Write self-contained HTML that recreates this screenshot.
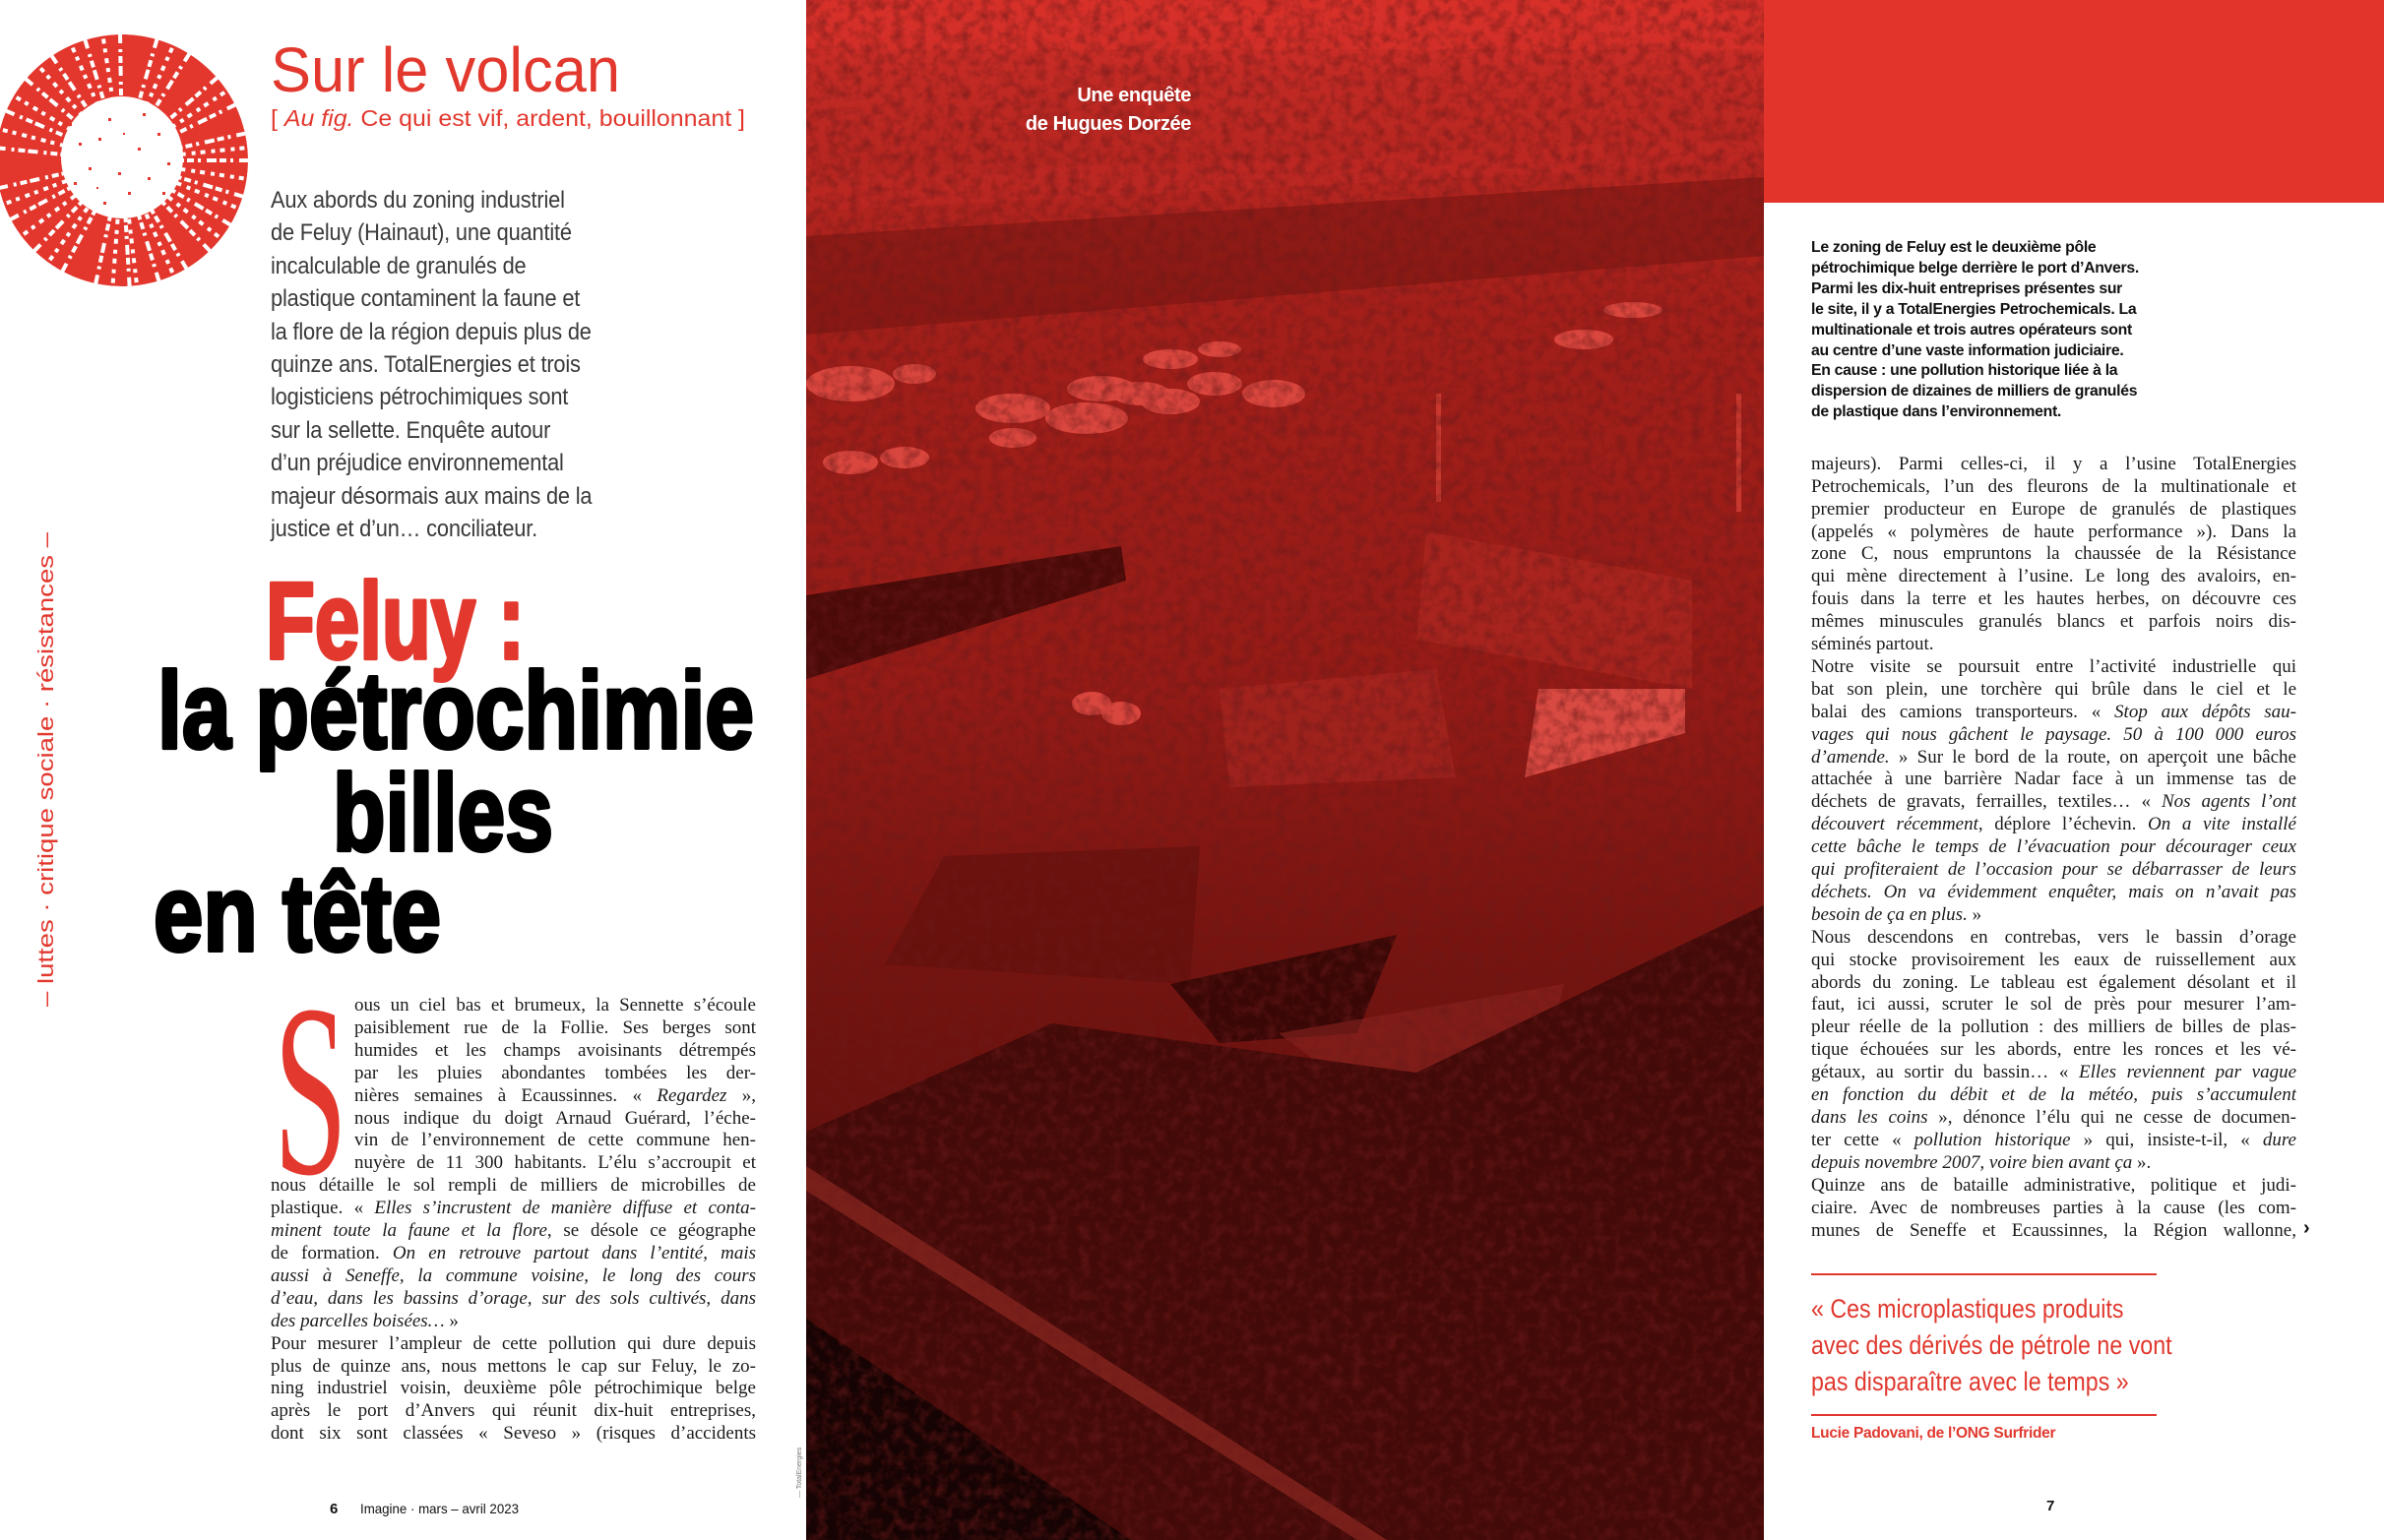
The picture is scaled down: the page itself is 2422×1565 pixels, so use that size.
<!DOCTYPE html>
<html><head><meta charset="utf-8">
<style>
*{margin:0;padding:0;box-sizing:border-box}
html,body{width:2422px;height:1565px;overflow:hidden;background:#fff}
body{position:relative;font-family:"Liberation Sans",sans-serif}
.abs{position:absolute}
.ln{position:absolute;height:23px;line-height:23px;font-family:"Liberation Serif",serif;font-size:19px;color:#1a1a1a;text-align:justify;text-align-last:justify;overflow:hidden;white-space:normal}
.ln.l{text-align-last:left}
.deck{position:absolute;left:275px;font-size:24.5px;line-height:33.4px;color:#3a3a3a;transform:scaleX(0.89);transform-origin:left top;white-space:nowrap;letter-spacing:-0.2px}
.intro{position:absolute;left:1840px;top:242px;font-weight:bold;font-size:15.8px;line-height:20.9px;color:#111;letter-spacing:-0.3px;white-space:nowrap}
.pq{position:absolute;left:1840px;font-size:27px;line-height:37px;color:#e0382e;transform:scaleX(0.86);transform-origin:left top;white-space:nowrap}
</style></head><body>

<svg class="abs" style="left:819px;top:0" width="973" height="1565" viewBox="0 0 973 1565">
<defs>
<linearGradient id="pg" x1="0" y1="0" x2="0" y2="1">
<stop offset="0" stop-color="#d9312a"/>
<stop offset="0.05" stop-color="#c22a24"/>
<stop offset="0.2" stop-color="#a41f1a"/>
<stop offset="0.45" stop-color="#941b16"/>
<stop offset="0.62" stop-color="#761410"/>
<stop offset="1" stop-color="#440a08"/>
</linearGradient>
<filter id="nz" x="0" y="0" width="100%" height="100%">
<feTurbulence type="fractalNoise" baseFrequency="0.09" numOctaves="3" seed="4"/>
<feColorMatrix type="matrix" values="0 0 0 0 0.15  0 0 0 0 0.01  0 0 0 0 0.01  0 0 0 -2.2 1.35"/>
</filter>
</defs>
<rect width="973" height="1565" fill="url(#pg)"/>
<rect y="0" width="973" height="50" fill="#d6302a" opacity="0.7"/>
<polygon points="0,240 973,180 973,260 0,340" fill="#6e120e" opacity="0.5"/>
<polygon points="0,180 973,140 973,165 0,215" fill="#c62b25" opacity="0.4"/>
<g fill="#d9463e">
<ellipse cx="45" cy="390" rx="45" ry="18"/><ellipse cx="110" cy="380" rx="22" ry="10"/>
<ellipse cx="210" cy="415" rx="38" ry="15"/><ellipse cx="285" cy="425" rx="42" ry="16"/>
<ellipse cx="300" cy="395" rx="35" ry="13"/><ellipse cx="340" cy="400" rx="30" ry="12"/>
<ellipse cx="370" cy="408" rx="30" ry="13"/><ellipse cx="415" cy="390" rx="28" ry="12"/>
<ellipse cx="475" cy="400" rx="32" ry="14"/><ellipse cx="370" cy="365" rx="28" ry="10"/>
<ellipse cx="420" cy="355" rx="22" ry="8"/><ellipse cx="210" cy="445" rx="24" ry="10"/>
<ellipse cx="45" cy="470" rx="28" ry="12"/><ellipse cx="100" cy="465" rx="25" ry="11"/>
<ellipse cx="790" cy="345" rx="30" ry="10"/><ellipse cx="840" cy="315" rx="30" ry="8"/>
<ellipse cx="290" cy="715" rx="20" ry="12"/><ellipse cx="320" cy="725" rx="20" ry="12"/>
</g>
<polygon points="0,605 320,555 325,590 0,690" fill="#4a0a08"/>
<polygon points="630,540 900,590 900,700 620,650" fill="#c8342c" opacity="0.35"/>
<polygon points="744,700 893,700 893,745 730,790" fill="#d84a42"/>
<polygon points="420,700 640,680 660,790 430,800" fill="#b02a23" opacity="0.5"/>
<rect x="640" y="400" width="5" height="110" fill="#c8382f"/><rect x="945" y="400" width="5" height="120" fill="#c8382f"/>
<polygon points="140,870 400,860 390,1000 80,980" fill="#5e0f0c" opacity="0.6"/>
<polygon points="370,1000 600,950 560,1050 420,1060" fill="#2a0504" opacity="0.8"/>
<polygon points="480,1050 770,1000 740,1120 520,1080" fill="#8c2520" opacity="0.6"/>
<polygon points="0,1150 250,1040 620,1090 973,920 973,1565 0,1565" fill="#420a08"/>
<polygon points="0,1185 590,1565 560,1565 0,1210" fill="#7a201b"/>
<polygon points="0,1340 330,1565 0,1565" fill="#160303"/>
<rect width="973" height="1565" filter="url(#nz)" opacity="0.55"/>
<text x="391" y="103" text-anchor="end" font-family="Liberation Sans" font-weight="bold" font-size="20" fill="#fff" letter-spacing="-0.4">Une enquête</text>
<text x="391" y="132" text-anchor="end" font-family="Liberation Sans" font-weight="bold" font-size="20" fill="#fff" letter-spacing="-0.4">de Hugues Dorzée</text>
</svg>

<div class="abs" style="left:1792px;top:0;width:630px;height:206px;background:#e3342c"></div>

<svg class="abs" style="left:0;top:0" width="819" height="1565" viewBox="0 0 819 1565">
<defs><clipPath id="cc"><circle cx="124" cy="163" r="128"/></clipPath></defs>
<g clip-path="url(#cc)">
<circle cx="124" cy="163" r="128" fill="#e3362d"/>
<g stroke="#fff" stroke-width="4" stroke-dasharray="7 4 3 6 10 3" fill="none">
<path d="M124 163 L254 163 M124 163 L248 200 M124 163 L240 232 M124 163 L222 264 M124 163 L196 284 M124 163 L164 294 M124 163 L132 297 M124 163 L96 294 M124 163 L60 282 M124 163 L30 260 M124 163 L5 226 M124 163 L-5 192 M124 163 L-6 150 M124 163 L0 110 M124 163 L20 75 M124 163 L48 50 M124 163 L85 36 M124 163 L122 33 M124 163 L160 38 M124 163 L194 52 M124 163 L224 76 M124 163 L242 105 M124 163 L252 135"/>
<path d="M124 163 L252 182 M124 163 L234 250 M124 163 L182 292 M124 163 L114 297 M124 163 L45 272 M124 163 L-3 210 M124 163 L-5 130 M124 163 L33 60 M124 163 L104 33 M124 163 L177 44 M124 163 L234 90 M124 163 L252 150 M124 163 L70 40 M124 163 L10 95 M124 163 L250 215 M124 163 L140 298 M124 163 L15 245" stroke-dasharray="5 6 4 5"/>
</g>
<circle cx="124" cy="160" r="62" fill="#fff"/>
<g fill="#e3362d"><rect x="100" y="140" width="3" height="3"/><rect x="140" y="150" width="3" height="3"/><rect x="120" y="175" width="3" height="3"/><rect x="90" y="170" width="3" height="3"/><rect x="150" y="180" width="3" height="3"/><rect x="110" y="120" width="3" height="3"/><rect x="160" y="135" width="3" height="3"/><rect x="80" y="145" width="3" height="3"/><rect x="130" y="195" width="3" height="3"/><rect x="75" y="185" width="3" height="3"/><rect x="170" y="165" width="3" height="3"/><rect x="105" y="205" width="3" height="3"/><rect x="145" y="115" width="3" height="3"/><rect x="125" y="135" width="2" height="2"/><rect x="98" y="190" width="2" height="2"/><rect x="165" y="195" width="3" height="3"/><rect x="70" y="125" width="3" height="3"/></g>
</g>
<text x="275" y="93" font-family="Liberation Sans" font-size="64" fill="#e2382e" textLength="355" lengthAdjust="spacingAndGlyphs">Sur le volcan</text>
<text x="275" y="128" font-family="Liberation Sans" font-size="23" fill="#e2382e" textLength="482" lengthAdjust="spacingAndGlyphs">[ <tspan font-style="italic">Au fig.</tspan> Ce qui est vif, ardent, bouillonnant ]</text>
<g font-family="Liberation Sans" font-weight="bold" font-size="110" stroke-width="4" stroke-linejoin="round">
<text x="270" y="669" fill="#e2382e" stroke="#e2382e" textLength="263" lengthAdjust="spacingAndGlyphs">Feluy :</text>
<text x="160" y="760" fill="#000" stroke="#000" textLength="606" lengthAdjust="spacingAndGlyphs">la pétrochimie</text>
<text x="338" y="864" fill="#000" stroke="#000" textLength="224" lengthAdjust="spacingAndGlyphs">billes</text>
<text x="156" y="966" fill="#000" stroke="#000" textLength="292" lengthAdjust="spacingAndGlyphs">en tête</text>
</g>
<text transform="translate(54,1023) rotate(-90)" font-family="Liberation Sans" font-size="22" fill="#e2382e" textLength="482" lengthAdjust="spacingAndGlyphs">– luttes · critique sociale · résistances –</text>
<text x="278" y="1192" font-family="Liberation Serif" font-size="250" fill="#e2382e" textLength="75" lengthAdjust="spacingAndGlyphs">S</text>
<text x="335" y="1538" font-family="Liberation Sans" font-weight="bold" font-size="15" fill="#111">6</text>
<text x="366" y="1538" font-family="Liberation Sans" font-size="14" fill="#111" textLength="161" lengthAdjust="spacingAndGlyphs">Imagine · mars – avril 2023</text>
<text transform="translate(814,1522) rotate(-90)" font-family="Liberation Sans" font-size="7" fill="#777">— TotalEnergies</text>
</svg>

<div class="deck" style="top:187px">Aux abords du zoning industriel<br>de Feluy (Hainaut), une quantité<br>incalculable de granulés de<br>plastique contaminent la faune et<br>la flore de la région depuis plus de<br>quinze ans. TotalEnergies et trois<br>logisticiens pétrochimiques sont<br>sur la sellette. Enquête autour<br>d’un préjudice environnemental<br>majeur désormais aux mains de la<br>justice et d’un… conciliateur.</div>

<div class="ln" style="left:360px;width:408px;top:1010px">ous un ciel bas et brumeux, la Sennette s’écoule</div>
<div class="ln" style="left:360px;width:408px;top:1033px">paisiblement rue de la Follie. Ses berges sont</div>
<div class="ln" style="left:360px;width:408px;top:1056px">humides et les champs avoisinants détrempés</div>
<div class="ln" style="left:360px;width:408px;top:1079px">par les pluies abondantes tombées les der-</div>
<div class="ln" style="left:360px;width:408px;top:1102px">nières semaines à Ecaussinnes. « <i>Regardez</i> »,</div>
<div class="ln" style="left:360px;width:408px;top:1125px">nous indique du doigt Arnaud Guérard, l’éche-</div>
<div class="ln" style="left:360px;width:408px;top:1147px">vin de l’environnement de cette commune hen-</div>
<div class="ln" style="left:360px;width:408px;top:1170px">nuyère de 11 300 habitants. L’élu s’accroupit et</div>
<div class="ln" style="left:275px;width:493px;top:1193px">nous détaille le sol rempli de milliers de microbilles de</div>
<div class="ln" style="left:275px;width:493px;top:1216px">plastique. « <i>Elles s’incrustent de manière diffuse et conta-</i></div>
<div class="ln" style="left:275px;width:493px;top:1239px"><i>minent toute la faune et la flore</i>, se désole ce géographe</div>
<div class="ln" style="left:275px;width:493px;top:1262px">de formation. <i>On en retrouve partout dans l’entité</i>, <i>mais</i></div>
<div class="ln" style="left:275px;width:493px;top:1285px"><i>aussi à Seneffe, la commune voisine, le long des cours</i></div>
<div class="ln" style="left:275px;width:493px;top:1308px"><i>d’eau, dans les bassins d’orage, sur des sols cultivés, dans</i></div>
<div class="ln l" style="left:275px;width:493px;top:1331px"><i>des parcelles boisées…</i> »</div>
<div class="ln" style="left:275px;width:493px;top:1354px">Pour mesurer l’ampleur de cette pollution qui dure depuis</div>
<div class="ln" style="left:275px;width:493px;top:1377px">plus de quinze ans, nous mettons le cap sur Feluy, le zo-</div>
<div class="ln" style="left:275px;width:493px;top:1399px">ning industriel voisin, deuxième pôle pétrochimique belge</div>
<div class="ln" style="left:275px;width:493px;top:1422px">après le port d’Anvers qui réunit dix-huit entreprises,</div>
<div class="ln" style="left:275px;width:493px;top:1445px">dont six sont classées « Seveso » (risques d’accidents</div>

<div class="intro">Le zoning de Feluy est le deuxième pôle<br>pétrochimique belge derrière le port d’Anvers.<br>Parmi les dix-huit entreprises présentes sur<br>le site, il y a TotalEnergies Petrochemicals. La<br>multinationale et trois autres opérateurs sont<br>au centre d’une vaste information judiciaire.<br>En cause : une pollution historique liée à la<br>dispersion de dizaines de milliers de granulés<br>de plastique dans l’environnement.</div>

<div class="ln" style="left:1840px;width:493px;top:460px">majeurs). Parmi celles-ci, il y a l’usine TotalEnergies</div>
<div class="ln" style="left:1840px;width:493px;top:483px">Petrochemicals, l’un des fleurons de la multinationale et</div>
<div class="ln" style="left:1840px;width:493px;top:506px">premier producteur en Europe de granulés de plastiques</div>
<div class="ln" style="left:1840px;width:493px;top:529px">(appelés « polymères de haute performance »). Dans la</div>
<div class="ln" style="left:1840px;width:493px;top:551px">zone C, nous empruntons la chaussée de la Résistance</div>
<div class="ln" style="left:1840px;width:493px;top:574px">qui mène directement à l’usine. Le long des avaloirs, en-</div>
<div class="ln" style="left:1840px;width:493px;top:597px">fouis dans la terre et les hautes herbes, on découvre ces</div>
<div class="ln" style="left:1840px;width:493px;top:620px">mêmes minuscules granulés blancs et parfois noirs dis-</div>
<div class="ln l" style="left:1840px;width:493px;top:643px">séminés partout.</div>
<div class="ln" style="left:1840px;width:493px;top:666px">Notre visite se poursuit entre l’activité industrielle qui</div>
<div class="ln" style="left:1840px;width:493px;top:689px">bat son plein, une torchère qui brûle dans le ciel et le</div>
<div class="ln" style="left:1840px;width:493px;top:712px">balai des camions transporteurs. « <i>Stop aux dépôts sau-</i></div>
<div class="ln" style="left:1840px;width:493px;top:735px"><i>vages qui nous gâchent le paysage. 50 à 100 000 euros</i></div>
<div class="ln" style="left:1840px;width:493px;top:758px"><i>d’amende.</i> » Sur le bord de la route, on aperçoit une bâche</div>
<div class="ln" style="left:1840px;width:493px;top:780px">attachée à une barrière Nadar face à un immense tas de</div>
<div class="ln" style="left:1840px;width:493px;top:803px">déchets de gravats, ferrailles, textiles… « <i>Nos agents l’ont</i></div>
<div class="ln" style="left:1840px;width:493px;top:826px"><i>découvert récemment</i>, déplore l’échevin. <i>On a vite installé</i></div>
<div class="ln" style="left:1840px;width:493px;top:849px"><i>cette bâche le temps de l’évacuation pour décourager ceux</i></div>
<div class="ln" style="left:1840px;width:493px;top:872px"><i>qui profiteraient de l’occasion pour se débarrasser de leurs</i></div>
<div class="ln" style="left:1840px;width:493px;top:895px"><i>déchets. On va évidemment enquêter, mais on n’avait pas</i></div>
<div class="ln l" style="left:1840px;width:493px;top:918px"><i>besoin de ça en plus.</i> »</div>
<div class="ln" style="left:1840px;width:493px;top:941px">Nous descendons en contrebas, vers le bassin d’orage</div>
<div class="ln" style="left:1840px;width:493px;top:964px">qui stocke provisoirement les eaux de ruissellement aux</div>
<div class="ln" style="left:1840px;width:493px;top:987px">abords du zoning. Le tableau est également désolant et il</div>
<div class="ln" style="left:1840px;width:493px;top:1009px">faut, ici aussi, scruter le sol de près pour mesurer l’am-</div>
<div class="ln" style="left:1840px;width:493px;top:1032px">pleur réelle de la pollution : des milliers de billes de plas-</div>
<div class="ln" style="left:1840px;width:493px;top:1055px">tique échouées sur les abords, entre les ronces et les vé-</div>
<div class="ln" style="left:1840px;width:493px;top:1078px">gétaux, au sortir du bassin… « <i>Elles reviennent par vague</i></div>
<div class="ln" style="left:1840px;width:493px;top:1101px"><i>en fonction du débit et de la météo, puis s’accumulent</i></div>
<div class="ln" style="left:1840px;width:493px;top:1124px"><i>dans les coins</i> », dénonce l’élu qui ne cesse de documen-</div>
<div class="ln" style="left:1840px;width:493px;top:1147px">ter cette « <i>pollution historique</i> » qui, insiste-t-il, « <i>dure</i></div>
<div class="ln l" style="left:1840px;width:493px;top:1170px"><i>depuis novembre 2007, voire bien avant ça</i> ».</div>
<div class="ln" style="left:1840px;width:493px;top:1193px">Quinze ans de bataille administrative, politique et judi-</div>
<div class="ln" style="left:1840px;width:493px;top:1216px">ciaire. Avec de nombreuses parties à la cause (les com-</div>
<div class="ln" style="left:1840px;width:493px;top:1239px">munes de Seneffe et Ecaussinnes, la Région wallonne,</div>
<div class="abs" style="left:2340px;top:1237px;font-size:20px;font-weight:bold;color:#111">›</div>

<div class="abs" style="left:1840px;top:1294px;width:351px;height:2px;background:#e0382e"></div>
<div class="pq" style="top:1312px">« Ces microplastiques produits<br>avec des dérivés de pétrole ne vont<br>pas disparaître avec le temps »</div>
<div class="abs" style="left:1840px;top:1437px;width:351px;height:2px;background:#e0382e"></div>
<div class="abs" style="left:1840px;top:1448px;font-size:15.5px;font-weight:bold;color:#e0382e;letter-spacing:-0.3px;white-space:nowrap">Lucie Padovani, de l’ONG Surfrider</div>

<div class="abs" style="left:2079px;top:1522px;font-size:15px;font-weight:bold;color:#111">7</div>
</body></html>
